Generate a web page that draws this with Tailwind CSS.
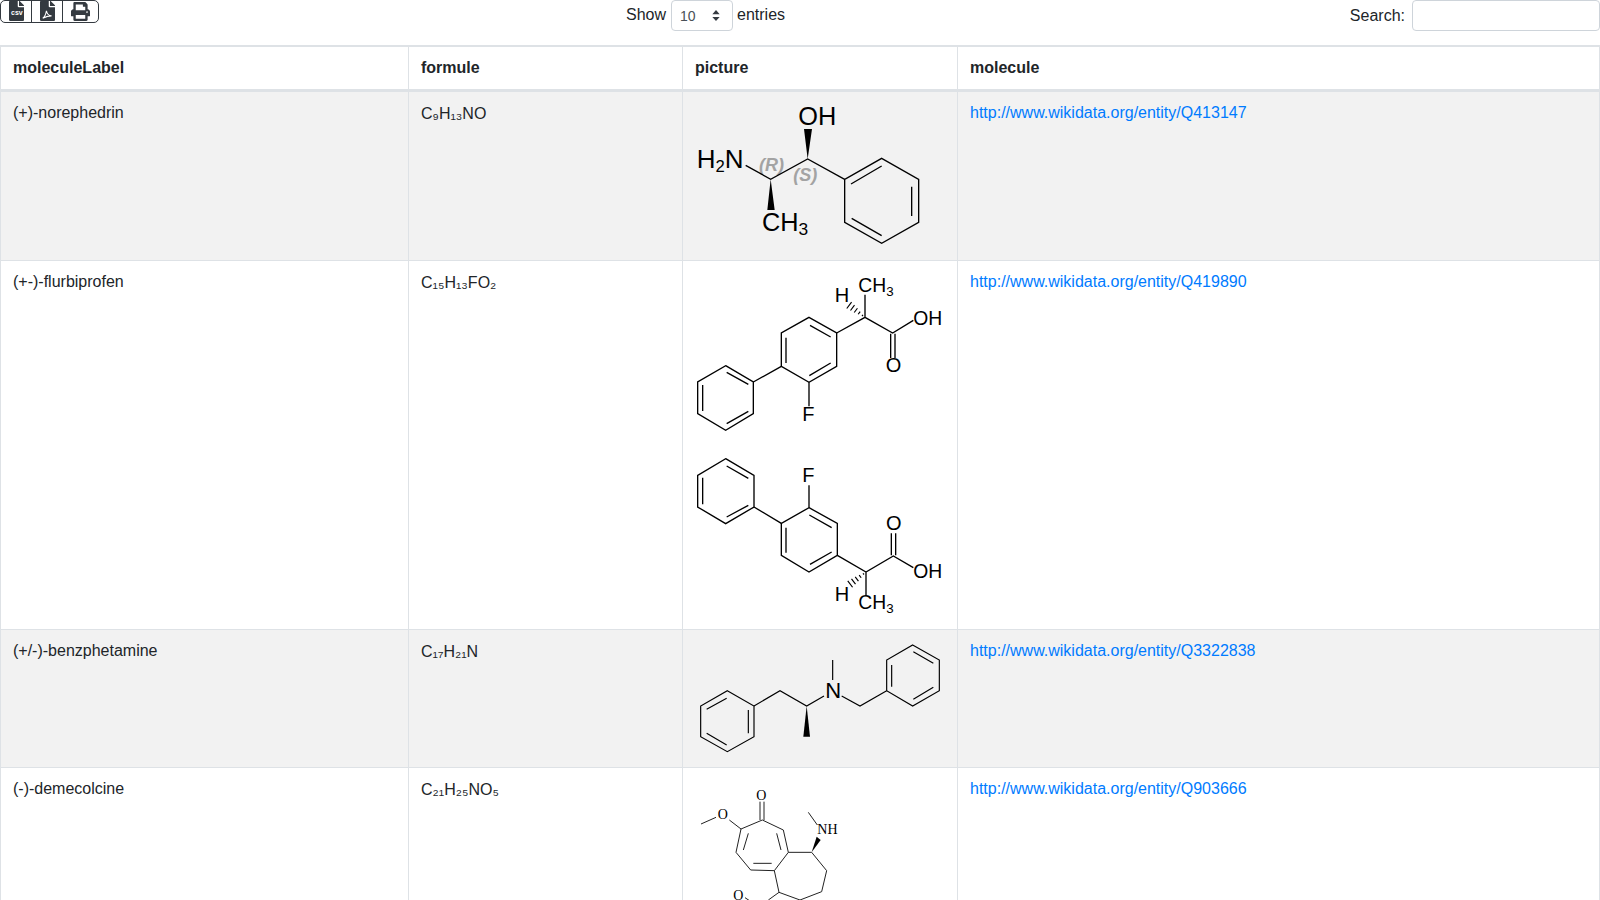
<!DOCTYPE html>
<html lang="en">
<head>
  <meta charset="UTF-8" />
  <title>Molecules</title>
  <script src="https://cdn.jsdelivr.net/npm/@tailwindcss/browser@4"></script>
</head>
<body class="h-[900px] overflow-hidden bg-white text-[#212529] text-base font-['Liberation_Sans',Arial,sans-serif]">
  <!-- TOOLBAR -->
  <div class="grid grid-cols-[626px_1fr_auto] h-[45px] items-start">
    <div class="flex w-[99px] h-[23px] border border-[#343a40] rounded-[5px] overflow-hidden divide-x divide-[#343a40]">
      <button class="w-[31px] flex items-start justify-center relative">
        <svg viewBox="0 0 384 512" class="w-[15px] h-[20px] fill-[#343a40]"><path d="M224 136V0H24C10.7 0 0 10.7 0 24v464c0 13.3 10.7 24 24 24h336c13.3 0 24-10.7 24-24V160H248c-13.2 0-24-10.8-24-24zm160-14.1v6.1H256V0h6.1c6.4 0 12.5 2.5 17 7l97.9 98c4.5 4.5 7 10.6 7 16.9z"/></svg>
        <span class="absolute left-[10px] top-[8px] text-[7px] leading-[8px] font-bold text-white">csv</span>
      </button>
      <button class="w-[31px] flex items-start justify-center">
        <svg viewBox="0 0 384 512" class="w-[15px] h-[20px] fill-[#343a40]"><path d="M224 136V0H24C10.7 0 0 10.7 0 24v464c0 13.3 10.7 24 24 24h336c13.3 0 24-10.7 24-24V160H248c-13.2 0-24-10.8-24-24zm160-14.1v6.1H256V0h6.1c6.4 0 12.5 2.5 17 7l97.9 98c4.5 4.5 7 10.6 7 16.9z"/><path d="M70 440c50-30 80-100 95-190c8 60 50 120 130 130c-60 0-140 20-225 60z" fill="none" stroke="#fff" stroke-width="28"/></svg>
      </button>
      <button class="flex-1 flex items-start justify-center pt-[1px]">
        <svg viewBox="0 0 512 512" class="w-[19px] h-[19px] fill-[#343a40]"><path d="M448 192V77.25c0-8.49-3.37-16.62-9.37-22.63L393.37 9.37c-6-6-14.14-9.37-22.63-9.37H96C78.33 0 64 14.33 64 32v160c-35.35 0-64 28.65-64 64v112c0 8.84 7.16 16 16 16h48v96c0 17.67 14.33 32 32 32h320c17.67 0 32-14.33 32-32v-96h48c8.84 0 16-7.16 16-16V256c0-35.35-28.65-64-64-64zm-64 256H128v-96h256v96zm0-224H128V64h192v48c0 8.84 7.16 16 16 16h48v96zm48 72c-13.25 0-24-10.75-24-24 0-13.26 10.75-24 24-24s24 10.74 24 24c0 13.25-10.75 24-24 24z"/></svg>
      </button>
    </div>
    <div class="flex items-start gap-[4px] leading-[30px]">
      <span class="mr-[1px]">Show</span>
      <div class="w-[62px] h-[31px] border border-[#ced4da] rounded flex items-center justify-between pl-[8px] pr-[12px] text-sm text-[#495057]">
        <span>10</span>
        <svg viewBox="0 0 8 12" class="w-[8px] h-[11px] fill-[#343a40]"><path d="M4 0 8 4.500H0zM4 12 0 7.500H8z"/></svg>
      </div>
      <span>entries</span>
    </div>
    <div class="flex items-start gap-[7px] leading-[31px]">
      <span>Search:</span>
      <input type="text" class="w-[188px] h-[31px] border border-[#ced4da] rounded outline-none" />
    </div>
  </div>

  <!-- TABLE -->
  <table class="w-[1600px] table-fixed border-collapse border border-[#dee2e6] [&_td]:border [&_td]:border-[#dee2e6] [&_td]:px-3 [&_td]:pt-[9px] [&_td]:pb-2 [&_td]:align-top [&_th]:border [&_th]:border-[#dee2e6] [&_th]:border-b-[3px] [&_th]:border-t-2 [&_th]:px-3 [&_th]:py-[9px] [&_th]:text-left [&_a]:text-[#007bff]">
    <colgroup>
      <col class="w-[408px]" />
      <col class="w-[274px]" />
      <col class="w-[275px]" />
      <col />
    </colgroup>
    <thead>
      <tr>
        <th>moleculeLabel</th>
        <th>formule</th>
        <th>picture</th>
        <th>molecule</th>
      </tr>
    </thead>
    <tbody>
      <tr class="bg-[#f2f2f2]">
        <td>(+)-norephedrin</td>
        <td><span class="block pt-[1px]">C₉H₁₃NO</span></td>
        <td>
          <svg viewBox="45 33 750 453" class="block w-[250px] h-[151px]" font-family="Liberation Sans">
            <text x="237" y="242" font-size="54" font-weight="bold" font-style="italic" fill="#a3a3a3">(R)</text>
            <text x="340" y="272" font-size="54" font-weight="bold" font-style="italic" fill="#a3a3a3">(S)</text>
            <g stroke="#000" stroke-width="4" fill="none">
              <path d="M605 205 716 268V397L605 460 494 397V268Z"/>
              <path d="M513 282 605 228M695 290V378M515 385 605 437"/>
              <path d="M494 268 383 207 272 268 197 226"/>
            </g>
            <path d="M383 207 372 117H396ZM272 268 262 360H284Z"/>
            <text x="355" y="105" font-size="76">OH</text>
            <text x="50" y="233" font-size="78">H<tspan font-size="50" dy="12">2</tspan><tspan dy="-12">N</tspan></text>
            <text x="246" y="422" font-size="76">CH<tspan font-size="52" dy="14">3</tspan></text>
          </svg>
        </td>
        <td><a href="#">http://www.wikidata.org/entity/Q413147</a></td>
      </tr>
      <tr>
        <td>(+-)-flurbiprofen</td>
        <td><span class="block pt-[1px]">C₁₅H₁₃FO₂</span></td>
        <td>
          <svg viewBox="45 21 750 528" class="block w-[250px] h-[176px]" font-family="Liberation Sans">
            <g stroke="#000" stroke-width="4" fill="none">
              <path d="M387 163 470 210V310L387 358 304 310V210Z"/>
              <path d="M390 187 452 222M318 224V300M388 338 452 300"/>
              <path d="M137 308 220 357V452L137 502 53 452V357Z"/>
              <path d="M140 328 205 364M68 366V444M140 482 205 445"/>
              <path d="M220 357 304 310M387 358V430M470 210 555 163 638 210 700 172M555 163V95M632 212V285M645 212V285"/>
            </g>
            <g stroke="#000" stroke-width="3.500">
              <path d="M546 159 549 155.500M534.500 153.700 540.500 145.700M522.700 148.500 532.300 135.700M511.500 142.500 523.500 126.500M500.300 136.500 514.700 117.300"/>
            </g>
            <text x="367" y="475" font-size="60">F</text>
            <text x="617" y="327" font-size="60">O</text>
            <text x="700" y="185" font-size="58">OH</text>
            <text x="464" y="117" font-size="60">H</text>
            <text x="535" y="88" font-size="58">CH<tspan font-size="40" dy="12">3</tspan></text>
          </svg>
          <svg viewBox="45 0 750 525" class="block w-[250px] h-[175px]" font-family="Liberation Sans">
            <g stroke="#000" stroke-width="4" fill="none">
              <path d="M387 185 472 232V328L387 378 304 328V232Z"/>
              <path d="M388 207 455 245M318 245V320M390 355 455 318"/>
              <path d="M137 38 222 88V183L137 233 53 183V88Z"/>
              <path d="M140 60 205 97M68 95V175M140 213 205 178"/>
              <path d="M222 183 304 232M387 185V118M472 328 558 378 640 330 700 365M558 378V448M634 328V262M647 328V262"/>
            </g>
            <g stroke="#000" stroke-width="3.500" transform="translate(3 541) scale(1 -1)">
              <path d="M546 159 549 155.500M534.500 153.700 540.500 145.700M522.700 148.500 532.300 135.700M511.500 142.500 523.500 126.500M500.300 136.500 514.700 117.300"/>
            </g>
            <text x="367" y="108" font-size="60">F</text>
            <text x="618" y="252" font-size="60">O</text>
            <text x="700" y="397" font-size="58">OH</text>
            <text x="464" y="465" font-size="60">H</text>
            <text x="535" y="490" font-size="58">CH<tspan font-size="40" dy="12">3</tspan></text>
          </svg>
        </td>
        <td><a href="#">http://www.wikidata.org/entity/Q419890</a></td>
      </tr>
      <tr class="bg-[#f2f2f2]">
        <td>(+/-)-benzphetamine</td>
        <td><span class="block pt-[1px]">C₁₇H₂₁N</span></td>
        <td>
          <svg viewBox="45 27 750 360" class="block w-[250px] h-[120px]" font-family="Liberation Sans">
            <g stroke="#000" stroke-width="3.500" fill="none">
              <path d="M142 182 222 228V320L142 365 62 320V228Z"/>
              <path d="M80 238 140 205M205 240V310M80 310 140 345"/>
              <path d="M222 228 300 182 380 228 432 198M458 90V150M485 198 540 228 620 182"/>
              <path d="M698 45 778 90V182L698 228 620 182V90Z"/>
              <path d="M700 65 760 100M635 105V170M700 208 760 172"/>
            </g>
            <path d="M380 228 370 320H390Z"/>
            <text x="436" y="205" font-size="66">N</text>
          </svg>
        </td>
        <td><a href="#">http://www.wikidata.org/entity/Q3322838</a></td>
      </tr>
      <tr>
        <td>(-)-demecolcine</td>
        <td><span class="block pt-[1px]">C₂₁H₂₅NO₅</span></td>
        <td>
          <svg viewBox="45 36 750 750" class="block w-[250px] h-[250px]" font-family="Liberation Serif">
            <g stroke="#222" stroke-width="3" fill="none">
              <path d="M247 165 310 195 325 262 283 317 212 315 168 262 183 192Z"/>
              <path d="M290 205 303 255M220 295H275M205 205 190 255"/>
              <path d="M240 110V165M252 110V165M183 192 148 165M108 157 63 177M385 142 412 180"/>
              <path d="M325 262H395L440 317 425 380 360 405 297 382 283 317M297 382 265 405M195 398 210 408"/>
            </g>
            <path d="M395 262 410 215 422 225Z"/>
            <text x="229" y="105" font-size="42">O</text>
            <text x="113" y="162" font-size="42">O</text>
            <text x="412" y="208" font-size="42">NH</text>
            <text x="160" y="405" font-size="42">O</text>
          </svg>
        </td>
        <td><a href="#">http://www.wikidata.org/entity/Q903666</a></td>
      </tr>
    </tbody>
  </table>
</body>
</html>
